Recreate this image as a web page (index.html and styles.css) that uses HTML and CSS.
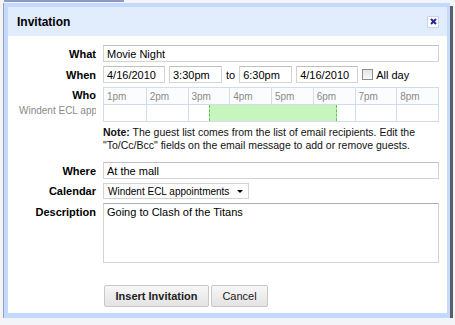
FILE: index.html
```html
<!DOCTYPE html>
<html lang="en">
<head>
    <meta charset="UTF-8">
    <meta name="viewport" content="width=device-width, initial-scale=1.0">
    <title>Invitation</title>
    <link rel="stylesheet" href="styles.css">
</head>
<body>

    <div class="top-strip"></div>

    <div class="dialog">
        <div class="dialog-inner">

            <!-- Header -->
            <div class="dialog-header">
                <span class="dialog-title">Invitation</span>
                <span class="close-btn">
                    <svg width="7" height="7" viewBox="0 0 7 7"><path d="M1 1L6 6M6 1L1 6" stroke="#2b2496" stroke-width="2"/></svg>
                </span>
            </div>

            <div class="form">
                <div class="label">What</div>
                <div class="field"><input class="text-input full" type="text" value="Movie Night"></div>

                <div class="label">When</div>
                <div class="field when-row">
                    <input class="text-input date" type="text" value="4/16/2010">
                    <input class="text-input time" type="text" value="3:30pm">
                    <span class="to">to</span>
                    <input class="text-input time" type="text" value="6:30pm">
                    <input class="text-input date" type="text" value="4/16/2010">
                    <span class="allday"><span class="checkbox"></span>All day</span>
                </div>

                <!-- Who / availability grid -->
                <div class="label who-label">
                    <div>Who</div>
                    <div class="guest">Windent ECL appointments</div>
                </div>
                <div class="field">
                    <div class="schedule">
                        <div class="hour">1pm</div>
                        <div class="hour">2pm</div>
                        <div class="hour">3pm</div>
                        <div class="hour">4pm</div>
                        <div class="hour">5pm</div>
                        <div class="hour">6pm</div>
                        <div class="hour">7pm</div>
                        <div class="hour">8pm</div>
                        <div class="slot"></div>
                        <div class="slot"></div>
                        <div class="slot"></div>
                        <div class="slot"></div>
                        <div class="slot"></div>
                        <div class="slot"></div>
                        <div class="slot"></div>
                        <div class="slot"></div>
                        <div class="busy" style="left: 105px; width: 126px;"></div>
                    </div>
                </div>

                <div></div>
                <div class="note"><b>Note:</b> The guest list comes from the list of email recipients. Edit the "To/Cc/Bcc" fields on the email message to add or remove guests.</div>

                <div class="label where-label">Where</div>
                <div class="field where-field"><input class="text-input full" type="text" value="At the mall"></div>

                <div class="label">Calendar</div>
                <div class="field">
                    <div class="select"><span class="select-text">Windent ECL appointments</span><span class="arrow"></span></div>
                </div>

                <div class="label desc-label">Description</div>
                <div class="field"><textarea class="textarea">Going to Clash of the Titans</textarea></div>

                <div></div>
                <div class="buttons">
                    <button class="btn primary">Insert Invitation</button>
                    <button class="btn">Cancel</button>
                </div>
            </div>

        </div>
    </div>

</body>
</html>
```

FILE: styles.css
```css
body {
    margin: 0;
    background: #f2f4f7;
    font-family: Arial, "Liberation Sans", sans-serif;
    font-size: 11px;
    color: #000;
}
.top-strip {
    height: 2px;
    width: 120px;
    background: #8c9bc4;
    margin-left: 4px;
}
.dialog {
    margin: 1px 0 0 3px;
    width: 447px;
    height: 315px;
    box-sizing: border-box;
    background: #c3d9ff;
    padding: 4px 3px 5px 4px;
    box-shadow: 3px 3px 0 #5a5f66;
    border-left: 1px solid #9aa3b0;
}
.dialog-inner {
    background: white;
    height: 100%;
}
.dialog-header {
    background: #e1ecfd;
    height: 29px;
    display: flex;
    align-items: center;
    justify-content: space-between;
    padding: 0 8px 0 9px;
}
.dialog-title {
    font-weight: bold;
    font-size: 12px;
}
.close-btn {
    width: 12px;
    height: 12px;
    background: white;
    border: 1px solid #c8d4ea;
    box-sizing: border-box;
    display: flex;
    align-items: center;
    justify-content: center;
}
.form {
    display: grid;
    grid-template-columns: 88px 336px;
    column-gap: 7px;
    row-gap: 4px;
    padding-top: 9px;
}
.label {
    text-align: right;
    font-weight: bold;
    align-self: center;
}
.field {
    min-width: 0;
}
.text-input {
    height: 17px;
    box-sizing: border-box;
    border: 1px solid #d3d3d3;
    border-top-color: #c0c0c0;
    padding: 0 3px;
    font: inherit;
    font-size: 11px;
    margin: 0;
}
.full {
    width: 100%;
}
.when-row {
    display: flex;
    align-items: center;
}
.when-row .date {
    width: 62px;
}
.when-row .time {
    width: 53px;
    margin-left: 4px;
}
.when-row .time + .date {
    margin-left: 4px;
}
.to {
    margin: 0 0 0 4px;
}
.allday {
    display: flex;
    align-items: center;
    margin-left: 4px;
    white-space: nowrap;
}
.checkbox {
    width: 9px;
    height: 9px;
    border: 1px solid #8e8e8e;
    background: linear-gradient(#e4e4e4, #fafafa);
    margin-right: 3px;
}
.who-label {
    align-self: start;
    padding-top: 2px;
}
.guest {
    font-weight: normal;
    color: #8a8a8a;
    text-align: left;
    white-space: nowrap;
    overflow: hidden;
    padding-left: 11px;
    margin-top: 4px;
    font-size: 10px;
}
.schedule {
    position: relative;
    display: grid;
    grid-template-columns: repeat(8, 1fr);
    grid-template-rows: 17px 16px;
    border: 1px solid #d3dcec;
}
.hour {
    color: #8a8a8a;
    font-size: 10px;
    padding: 3px 0 0 3px;
    border-left: 1px solid #d3dcec;
    border-bottom: 1px solid #d3dcec;
    background: #fbfcfe;
}
.slot {
    border-left: 1px solid #d3dcec;
}
.hour:first-child,
.slot:nth-child(9) {
    border-left: none;
}
.busy {
    position: absolute;
    top: 17px;
    bottom: 0;
    background: #c6f6bd;
    border-left: 1px dashed #5ec94c;
    border-right: 1px dashed #5ec94c;
}
.note {
    font-size: 10.5px;
    line-height: 13px;
    margin-top: 0;
    color: #111;
}
.where-label,
.where-field {
    margin-top: 6px;
}
.select {
    display: inline-flex;
    align-items: center;
    justify-content: space-between;
    white-space: nowrap;
    height: 16px;
    box-sizing: border-box;
    width: 146px;
    border: 1px solid #d3d3d3;
    padding: 0 5px 0 4px;
    font-size: 10px;
}
.arrow {
    width: 0;
    height: 0;
    border-left: 3px solid transparent;
    border-right: 3px solid transparent;
    border-top: 3px solid #000;
}
.desc-label {
    align-self: start;
    padding-top: 3px;
}
.textarea {
    display: block;
    width: 100%;
    height: 60px;
    box-sizing: border-box;
    border: 1px solid #d3d3d3;
    border-top-color: #a8b0bc;
    font: inherit;
    font-size: 11px;
    padding: 2px 3px;
    margin: 0;
    resize: none;
}
.buttons {
    display: flex;
    gap: 2px;
    margin-top: 18px;
    padding-left: 1px;
}
.btn {
    height: 22px;
    background: linear-gradient(#f7f7f7, #e3e3e3);
    border: 1px solid #c8c8c8;
    border-radius: 2px;
    font: inherit;
    font-size: 11px;
    color: #222;
    padding: 0;
    white-space: nowrap;
    cursor: pointer;
}
.btn.primary {
    font-weight: bold;
    width: 105px;
}
.btn + .btn {
    width: 57px;
}
```
